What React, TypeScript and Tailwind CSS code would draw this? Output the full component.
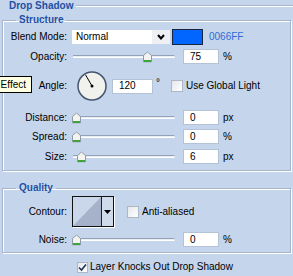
import React from "react";

const Thumb = () => (
  <svg width="9" height="11" viewBox="0 0 9 11">
    <path d="M0.5 4 L4.5 0.5 L8.5 4 V10.5 H0.5 Z" fill="#f3f4ef" stroke="#8d9aa8" />
    <rect x="1" y="8.5" width="7" height="2" fill="#3ea43a" />
  </svg>
);

const Slider = ({ offset }: { offset: number }) => (
  <div className="relative w-[104px] h-full flex items-center">
    <div className="ml-[1px] w-[102px] h-[3px] border-t border-t-[#93a1b6] border-b border-b-white bg-[#e9eef5] rounded-r-[2px]" />
    <div className="absolute top-1/2 -translate-y-1/2" style={{ left: offset }}>
      <Thumb />
    </div>
  </div>
);

const Input = ({ value, w = "w-[36px]" }: { value: string; w?: string }) => (
  <div className={`${w} h-[15px] bg-white border border-[#b4c2d6] flex items-center pl-[6px] text-[10px] leading-none`}>
    {value}
  </div>
);

const Label = ({ children }: { children: React.ReactNode }) => (
  <div className="w-[64px] text-right leading-none">{children}</div>
);

const SliderRow = ({
  label,
  value,
  unit,
  offset,
  mt,
}: {
  label: string;
  value: string;
  unit: string;
  offset: number;
  mt: string;
}) => (
  <div className={`${mt} h-[15px] flex items-center`}>
    <Label>{label}</Label>
    <div className="ml-[5px] h-full">
      <Slider offset={offset} />
    </div>
    <div className="ml-[7px]">
      <Input value={value} />
    </div>
    <div className="ml-[4px] leading-none">{unit}</div>
  </div>
);

const Checkbox = ({ checked = false, size = "w-[12px] h-[12px]" }: { checked?: boolean; size?: string }) => (
  <div className={`${size} bg-gradient-to-br from-[#e4e7ec] to-white border border-[#aeb6c2] flex items-center justify-center`}>
    {checked && (
      <svg width="9" height="9" viewBox="0 0 9 9">
        <polyline points="1,4.5 3.5,7 8,1.5" fill="none" stroke="#22324f" strokeWidth="1.6" />
      </svg>
    )}
  </div>
);

const groupCls =
  "mx-[2px] border border-[#a6b5cc] shadow-[inset_1px_1px_0_#ffffff,1px_1px_0_#ffffff] px-0";

export default function App() {
  return (
    <div className="relative w-[293px] h-[276px] overflow-hidden bg-[#c5d5eb] text-black text-[10px] font-['Liberation_Sans',Arial,sans-serif]">
      {/* header */}
      <div className="h-[12px] flex items-center pl-[9px]">
        <span className="font-bold text-[#1f50a3] leading-none">Drop Shadow</span>
        <div className="flex-1 ml-[3px] border-t border-t-[#a6b5cc] border-b border-b-white" />
      </div>

      {/* Structure */}
      <fieldset className={`mt-[2px] ${groupCls}`}>
        <legend className="ml-[13px] px-[3px] font-bold text-[#1f50a3] leading-[12px]">Structure</legend>

        <div className="mt-[3px] h-[16px] flex items-center">
          <Label>Blend Mode:</Label>
          <div className="ml-[5px] w-[98px] h-[14px] bg-white flex items-center">
            <span className="flex-1 pl-[4px] leading-none">Normal</span>
            <div className="w-[18px] h-full bg-[#eef0f3] flex items-center justify-center">
              <svg width="8" height="6" viewBox="0 0 8 6">
                <polyline points="1,1 4,4.5 7,1" fill="none" stroke="#000" strokeWidth="2" />
              </svg>
            </div>
          </div>
          <div className="ml-[2px] w-[31px] h-[16px] bg-[#0066ff] border border-[#17243d]" />
          <div className="ml-[6px] text-[#2f6bd6] leading-none">0066FF</div>
        </div>

        <SliderRow mt="mt-[4px]" label="Opacity:" value="75" unit="%" offset={71} />

        <div className="mt-[7px] h-[30px] flex items-center">
          <Label>Angle:</Label>
          <div className="ml-[10px] w-[30px] h-[30px]">
            <svg width="30" height="30" viewBox="0 0 30 30">
              <circle cx="15" cy="15" r="14" fill="#f1f1ee" stroke="#46556f" strokeWidth="1.5" />
              <line x1="15" y1="15" x2="8.5" y2="3.8" stroke="#000" strokeWidth="1" />
              <circle cx="15" cy="15" r="1.5" fill="#000" />
            </svg>
          </div>
          <div className="ml-[5px]">
            <Input value="120" w="w-[41px]" />
          </div>
          <div className="ml-[3px] self-start mt-[7px] leading-none">°</div>
          <div className="ml-[11px]">
            <Checkbox />
          </div>
          <div className="ml-[3px] leading-none">Use Global Light</div>
        </div>

        <SliderRow mt="mt-[9px]" label="Distance:" value="0" unit="px" offset={0} />
        <SliderRow mt="mt-[4px]" label="Spread:" value="0" unit="%" offset={0} />
        <SliderRow mt="mt-[5px]" label="Size:" value="6" unit="px" offset={5} />
        <div className="h-[6px]" />
      </fieldset>

      {/* Quality */}
      <fieldset className={`mt-[11px] ${groupCls}`}>
        <legend className="ml-[13px] px-[3px] font-bold text-[#1f50a3] leading-[12px]">Quality</legend>

        <div className="mt-[2px] h-[31px] flex items-center">
          <Label>Contour:</Label>
          <div className="ml-[5px] w-[42px] h-[31px] border border-[#111] flex shadow-[1px_1px_0_#ffffff]">
            <div className="w-[29px] h-full border-r border-r-[#222]">
              <svg width="28" height="29" viewBox="0 0 28 29" className="block">
                <rect x="0" y="0" width="28" height="29" fill="#cad6e9" />
                <polygon points="0,29 28,0 28,29" fill="#a5b2c9" />
              </svg>
            </div>
            <div className="flex-1 bg-[#cfdaeb] flex items-center justify-center">
              <svg width="7" height="4" viewBox="0 0 7 4">
                <polygon points="0,0 7,0 3.5,4" fill="#000" />
              </svg>
            </div>
          </div>
          <div className="ml-[13px]">
            <Checkbox />
          </div>
          <div className="ml-[3px] leading-none">Anti-aliased</div>
        </div>

        <SliderRow mt="mt-[5px]" label="Noise:" value="0" unit="%" offset={0} />
        <div className="h-[5px]" />
      </fieldset>

      <div className="mt-[8px] h-[12px] flex items-center pl-[77px]">
        <Checkbox checked size="w-[11px] h-[11px]" />
        <div className="ml-[2px] leading-none">Layer Knocks Out Drop Shadow</div>
      </div>

      {/* tooltip */}
      <div className="absolute left-[-2px] top-[76px] w-[34px] h-[17px] bg-[#ffffe1] border border-black flex items-center justify-end pr-[5px] leading-none">
        Effect
      </div>
    </div>
  );
}
